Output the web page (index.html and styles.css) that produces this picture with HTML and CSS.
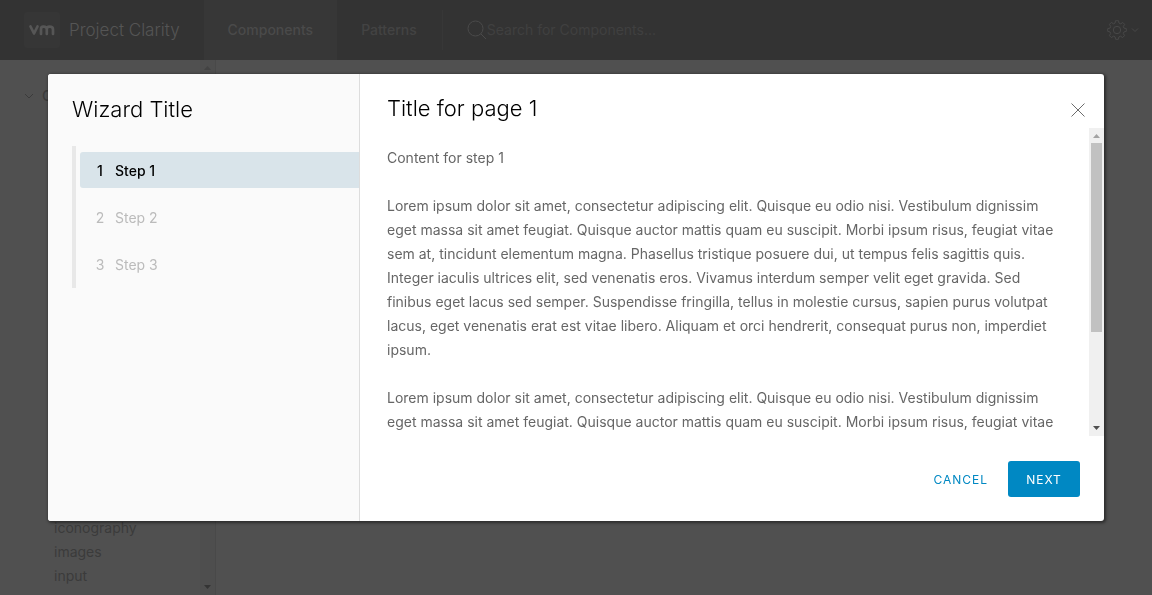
FILE: index.html
```html
<!DOCTYPE html>
<html lang="en">
<head>
<meta charset="utf-8">
<meta name="viewport" content="width=device-width, initial-scale=1">
<title>Project Clarity</title>
<link rel="stylesheet" href="styles.css">
</head>
<body>
<div class="app">
  <header class="header">
    <a class="brand" href="#">
      <svg class="brand-logo" viewBox="0 0 36 36" aria-hidden="true">
        <rect width="36" height="36" rx="3" fill="#363636"/>
        <path d="M6.500 14.500L10 21.500L13.500 14.500M17 22V17Q17 14.700 19.300 14.700Q22.800 14.700 22.800 17V22M22.800 17Q22.800 14.700 25.500 14.700Q29 14.700 29 17.500V22" fill="none" stroke="#565656" stroke-width="2.700" stroke-linecap="round" stroke-linejoin="round"/>
      </svg>
      <span class="brand-name">Project Clarity</span>
    </a>
    <nav class="header-nav">
      <a class="nav-link active" href="#">Components</a>
      <a class="nav-link" href="#">Patterns</a>
    </nav>
    <label class="search">
      <svg class="search-icon" viewBox="0 0 20 20" aria-hidden="true"><circle cx="8.500" cy="8.500" r="7.500" /><path d="M13.800 13.800L19 19"/></svg>
      <input class="search-input" type="search" placeholder="Search for Components..." aria-label="Search for Components">
    </label>
    <button class="settings" type="button" aria-label="Settings">
      <svg class="gear" viewBox="0 0 20 20" aria-hidden="true"><circle cx="10" cy="10" r="3.700"/><path d="M8.500 .7H11.500L12 3.100L13.700 3.800L15.800 2.500L17.700 4.400L16.300 6.500L17 8.100L19.300 8.600V11.400L17 11.900L16.300 13.500L17.600 15.600L15.600 17.600L13.500 16.200L11.900 16.900L11.400 19.300H8.600L8.100 16.900L6.500 16.200L4.400 17.600L2.400 15.600L3.700 13.500L3 11.900L.7 11.400V8.600L3 8.100L3.700 6.500L2.400 4.400L4.400 2.400L6.500 3.800L8 3.100Z"/></svg>
      <svg class="caret" viewBox="0 0 8 8" aria-hidden="true"><path d="M1 2.500L4 5.500L7 2.500"/></svg>
    </button>
  </header>
  <div class="workspace">
    <aside class="sidebar">
      <nav class="tree">
        <div class="tree-title">
          <svg class="tree-caret" viewBox="0 0 10 10" aria-hidden="true"><path d="M1 3L5 7L9 3"/></svg>
          <span>Code</span>
        </div>
        <div class="tree-items">
          <a href="#">iconography</a>
          <a href="#">images</a>
          <a href="#">input</a>
        </div>
      </nav>
      <div class="track track-dim" aria-hidden="true">
        <svg viewBox="0 0 15 15"><path d="M4 10H11L7.500 6Z" fill="#434343"/></svg>
        <svg viewBox="0 0 15 15"><path d="M4 5H11L7.500 9Z" fill="#343434"/></svg>
      </div>
    </aside>
    <main class="page"></main>
  </div>
</div>

<div class="overlay">
  <section class="modal" role="dialog" aria-modal="true" aria-labelledby="wizard-title">
    <aside class="steps">
      <h1 class="wizard-title" id="wizard-title">Wizard Title</h1>
      <ol class="step-list">
        <li><button class="step current" type="button" aria-current="step"><span class="step-number">1</span><span>Step 1</span></button></li>
        <li><button class="step" type="button" disabled><span class="step-number">2</span><span>Step 2</span></button></li>
        <li><button class="step" type="button" disabled><span class="step-number">3</span><span>Step 3</span></button></li>
      </ol>
    </aside>
    <div class="content">
      <div class="content-header">
        <h2 class="page-title">Title for page 1</h2>
        <button class="close" type="button" aria-label="Close"><svg viewBox="0 0 16 16" aria-hidden="true"><path d="M1.500 1.500L14.500 14.500M14.500 1.500L1.500 14.500"/></svg></button>
      </div>
      <div class="scroll-area">
        <div class="body-text">
          <p>Content for step 1</p>
          <p>Lorem ipsum dolor sit amet, consectetur adipiscing elit. Quisque eu odio nisi. Vestibulum dignissim eget massa sit amet feugiat. Quisque auctor mattis quam eu suscipit. Morbi ipsum risus, feugiat vitae sem at, tincidunt elementum magna. Phasellus tristique posuere dui, ut tempus felis sagittis quis. Integer iaculis ultrices elit, sed venenatis eros. Vivamus interdum semper velit eget gravida. Sed finibus eget lacus sed semper. Suspendisse fringilla, tellus in molestie cursus, sapien purus volutpat lacus, eget venenatis erat est vitae libero. Aliquam et orci hendrerit, consequat purus non, imperdiet ipsum.</p>
          <p>Lorem ipsum dolor sit amet, consectetur adipiscing elit. Quisque eu odio nisi. Vestibulum dignissim eget massa sit amet feugiat. Quisque auctor mattis quam eu suscipit. Morbi ipsum risus, feugiat vitae</p>
        </div>
        <div class="track" aria-hidden="true">
          <svg viewBox="0 0 15 15"><path d="M4 10H11L7.500 6Z" fill="#a3a3a3"/></svg>
          <div class="rail"><div class="thumb"></div></div>
          <svg viewBox="0 0 15 15"><path d="M4 5H11L7.500 9Z" fill="#505050"/></svg>
        </div>
      </div>
      <footer class="actions">
        <button class="button link-button" type="button">Cancel</button>
        <button class="button primary" type="button">Next</button>
      </footer>
    </div>
  </section>
</div>
</body>
</html>
```
FILE: styles.css
```css
* { box-sizing: border-box; }
body {
  margin: 0;
  background: #505050;
  color: #565656;
  font: 14px/24px Inter, "Liberation Sans", sans-serif;
}
button, input { font: inherit; border: 0; background: none; padding: 0; }
a { color: inherit; text-decoration: none; }
h1, h2, p, ol { margin: 0; padding: 0; }
ol { list-style: none; }
svg { display: block; flex: none; }

.app { display: flex; flex-direction: column; height: 100vh; }
.header {
  display: flex;
  align-items: center;
  flex: none;
  height: 60px;
  background: #333;
}
.brand { display: flex; align-items: center; gap: 9px; padding: 0 24px; }
.brand-logo { width: 36px; height: 36px; }
.brand-name { font-size: 17px; font-weight: 300; color: #555; white-space: nowrap; }
.header-nav { display: flex; align-self: stretch; }
.nav-link {
  display: flex;
  align-items: center;
  padding: 0 24px;
  color: #434343;
  font-weight: 500;
}
.nav-link.active { background: #373737; color: #4a4a4a; }
.search {
  display: flex;
  align-items: center;
  flex: 1;
  height: 40px;
  margin-left: 1px;
  padding-left: 24px;
  border-left: 1px solid #373737;
}
.search-icon { width: 20px; height: 20px; fill: none; stroke: #4a4a4a; stroke-width: 1; }
.search-input { flex: 1; color: #444; }
.search-input::placeholder { color: #404040; opacity: 1; }
.settings { display: flex; align-items: center; gap: 4px; padding-right: 13px; }
.settings svg { fill: none; stroke: #484848; stroke-width: 1; }
.gear { width: 20px; height: 20px; }
.caret { width: 8px; height: 8px; }

.workspace { display: flex; flex: 1; min-height: 0; }
.sidebar { display: flex; width: 216px; border-right: 1px solid #494949; }
.tree {
  display: flex;
  flex: 1;
  flex-direction: column;
  justify-content: space-between;
  padding: 24px 0 7px 24px;
  color: #3b3b3b;
}
.tree-title { display: flex; align-items: center; gap: 8px; font-weight: 500; }
.tree-caret { width: 10px; height: 10px; fill: none; stroke: #3b3b3b; }
.tree-items { display: flex; flex-direction: column; padding-left: 30px; }
.page { flex: 1; }

.track {
  display: flex;
  flex: none;
  flex-direction: column;
  justify-content: space-between;
  width: 15px;
  background: #f0f0f0;
}
.track svg { width: 15px; height: 15px; }
.track-dim { background: #4e4e4e; }
.rail { flex: 1; padding: 0 2px; }
.thumb { height: 68%; background: #c1c1c1; }

.overlay {
  position: fixed;
  inset: 0;
  display: flex;
  align-items: center;
  padding: 0 48px;
}
.modal {
  display: flex;
  width: 100%;
  height: 75vh;
  overflow: hidden;
  background: #fff;
  border-radius: 3px;
  box-shadow: 1px 1px 3px 1px rgba(0, 0, 0, .45);
}
.steps {
  flex: none;
  width: 312px;
  padding: 23px 0 24px 24px;
  background: #fafafa;
  border-right: 1px solid #ddd;
}
.wizard-title, .page-title { font-size: 22px; line-height: 24px; font-weight: 300; color: #000; }
.step-list {
  display: flex;
  flex-direction: column;
  gap: 11px;
  margin-top: 25px;
  padding: 6px 0 6px 4px;
  border-left: 4px solid #e8e8e8;
}
.step {
  display: flex;
  align-items: center;
  width: 100%;
  height: 36px;
  padding: 2px 0 0 15px;
  gap: 10px;
  border-radius: 3px 0 0 3px;
  color: #bbb;
}
.step-number { width: 10px; }
.step.current { background: #d9e4ea; color: #000; font-weight: 500; }
.content { display: flex; flex: 1; flex-direction: column; min-width: 0; }
.content-header {
  display: flex;
  justify-content: space-between;
  flex: none;
  height: 54px;
  padding: 22px 18px 0 27px;
}
.close { width: 16px; height: 16px; margin-top: 6px; }
.close svg { width: 16px; height: 16px; stroke: #6c6c6c; stroke-width: 1; }
.scroll-area { display: flex; flex: 1; min-height: 0; overflow: hidden; }
.body-text { flex: 1; min-width: 0; padding: 18px 27px 0; color: #666; }
.body-text p + p { margin-top: 24px; }
.actions {
  display: flex;
  flex: none;
  justify-content: flex-end;
  gap: 8px;
  padding: 25px 24px 24px;
}
.button {
  height: 36px;
  padding: 2px 12px 0;
  border-radius: 3px;
  font-size: 12px;
  letter-spacing: 1px;
  text-transform: uppercase;
}
.link-button { color: #0088c3; }
.primary { min-width: 72px; background: #0088c3; color: #fff; }
```
